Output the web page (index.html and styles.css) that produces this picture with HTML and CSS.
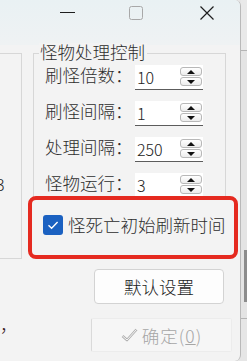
FILE: index.html
```html
<!DOCTYPE html>
<html lang="zh-CN">
<head>
  <meta charset="UTF-8">
  <meta name="viewport" content="width=device-width, initial-scale=1.0">
  <title>怪物处理控制</title>
  <link rel="stylesheet" href="styles.css">
</head>
<body>

<div class="screen">
  <div class="window">

    <div class="titlebar">
      <span class="tb-btn tb-min">
        <svg width="15" height="14" viewBox="0 0 15 14"><line x1="0" y1="6.5" x2="15" y2="6.5" stroke="#1e1e1e" stroke-width="1.1"/></svg>
      </span>
      <span class="tb-btn tb-max">
        <svg width="14" height="14" viewBox="0 0 14 14"><rect x="0.5" y="0.5" width="13" height="13" rx="2" fill="none" stroke="#a8a8a8" stroke-width="1"/></svg>
      </span>
      <span class="tb-btn tb-close">
        <svg width="14" height="14" viewBox="0 0 14 14"><path d="M0.5 0.5 L13.5 13.5 M13.5 0.5 L0.5 13.5" stroke="#1e1e1e" stroke-width="1.2"/></svg>
      </span>
    </div>

    <div class="content">
      <div class="left-pane">
        <div class="left-group">
          <span class="left-val">3</span>
        </div>
        <span class="comma">，</span>
      </div>

      <div class="right-pane">
        <div class="group">
          <span class="group-title">怪物处理控制</span>
          <div class="rows">
            <div class="row">
              <span class="label">刷怪倍数：</span>
              <div class="field"><span class="value">10</span><span class="spin"><span class="up"></span><span class="down"></span></span></div>
            </div>
            <div class="row">
              <span class="label">刷怪间隔：</span>
              <div class="field"><span class="value">1</span><span class="spin"><span class="up"></span><span class="down"></span></span></div>
            </div>
            <div class="row">
              <span class="label">处理间隔：</span>
              <div class="field"><span class="value">250</span><span class="spin"><span class="up"></span><span class="down"></span></span></div>
            </div>
            <div class="row">
              <span class="label">怪物运行：</span>
              <div class="field"><span class="value">3</span><span class="spin"><span class="up"></span><span class="down"></span></span></div>
            </div>
          </div>
        </div>

        <label class="highlight">
          <span class="checkbox">
            <svg width="20" height="20" viewBox="0 0 20 20"><path d="M5.5 10.2 L8.6 13.2 L14.6 7" fill="none" stroke="#fff" stroke-width="1.4"/></svg>
          </span>
          <span class="check-label">怪死亡初始刷新时间</span>
        </label>

        <button class="btn btn-default">默认设置</button>
        <button class="btn btn-ok">
          <svg class="ok-icon" width="17" height="14" viewBox="0 0 17 14">
            <path d="M1.5 8 L6 12 L15.5 1.5" fill="none" stroke="#b0b0b0" stroke-width="2.6" stroke-linejoin="round"/>
            <path d="M1.5 8 L6 12 L15.5 1.5" fill="none" stroke="#f6f6f6" stroke-width="1"/>
          </svg>
          <span>确定(<u>0</u>)</span>
        </button>
      </div>
    </div>
  </div>

  <div class="edge">
    <div class="edge-top"></div>
    <div class="edge-mid"><span class="edge-bar"></span></div>
    <div class="edge-low"></div>
  </div>
</div>

</body>
</html>
```

FILE: styles.css
```css
body {
  margin: 0;
  background: #e6e6e6;
  font-family: "Noto Sans CJK SC", "Noto Sans", sans-serif;
  font-weight: 300;
  color: #2e2e2e;
}
.screen {
  display: flex;
  width: 247px;
  height: 361px;
  overflow: hidden;
}
.window {
  width: 241px;
  height: 361px;
  flex: none;
  box-sizing: border-box;
  background: #f3f3f3;
  border-right: 1px solid #b9b9b9;
  border-radius: 0 6px 6px 0;
  display: flex;
  flex-direction: column;
  overflow: hidden;
}
.titlebar {
  height: 45px;
  flex: none;
  box-sizing: border-box;
  padding: 6px 0 0 60px;
  display: flex;
  align-items: flex-start;
  background: linear-gradient(#e9f1f3, #eff2f3);
}
.tb-btn svg {
  display: block;
}
.tb-max {
  margin-left: 54px;
}
.tb-close {
  margin-left: 57px;
}
.content {
  display: flex;
  flex: 1;
}
.left-pane {
  width: 22px;
  flex: none;
  display: flex;
  flex-direction: column;
}
.left-group {
  margin-top: 8px;
  height: 206px;
  box-sizing: border-box;
  border: 1px solid #d7d7d7;
  border-left: none;
  overflow: hidden;
}
.left-val {
  display: block;
  margin: 120px 0 0 -4px;
  font-size: 16px;
  line-height: 20px;
  color: #222;
}
.comma {
  margin-top: 56px;
  font-size: 17.5px;
  line-height: 20px;
  color: #3a2222;
}
.right-pane {
  margin-left: 6px;
  width: 210px;
  display: flex;
  flex-direction: column;
  align-items: flex-start;
}
.group {
  margin: 8px 0 0 5px;
  width: 193px;
  height: 146px;
  box-sizing: border-box;
  border: 1px solid #d7d7d7;
  display: flex;
  flex-direction: column;
  align-items: flex-start;
}
.group-title {
  margin: -11px 0 0 5px;
  padding: 0 2px 0 1px;
  background: #f3f3f3;
  font-size: 17.5px;
  line-height: 18px;
}
.rows {
  margin: -2px 0 0 11px;
}
.row {
  display: flex;
  align-items: center;
  height: 36px;
}
.label {
  width: 90px;
  margin-top: -5px;
  font-size: 17.5px;
  line-height: 20px;
}
.field {
  width: 68px;
  height: 25px;
  box-sizing: border-box;
  padding: 0 1px 0 2px;
  background: #fff;
  border-bottom: 1px solid #5c5c5c;
  display: flex;
  align-items: center;
  justify-content: space-between;
}
.value {
  font-size: 16px;
  line-height: 20px;
  color: #222;
}
.spin {
  width: 22px;
  display: flex;
  flex-direction: column;
  gap: 1px;
}
.spin span {
  height: 9px;
  box-sizing: border-box;
  border: 1px solid #b8b8b8;
  border-radius: 3px;
  background: linear-gradient(#ffffff, #ececec);
  display: flex;
  align-items: center;
  justify-content: center;
}
.spin .up::before,
.spin .down::before {
  content: "";
  border-left: 4px solid transparent;
  border-right: 4px solid transparent;
}
.spin .up::before {
  border-bottom: 4px solid #111;
}
.spin .down::before {
  border-top: 4px solid #111;
}
.highlight {
  margin-top: -3px;
  width: 210px;
  height: 63px;
  box-sizing: border-box;
  border: 4px solid #e52a20;
  border-radius: 8px;
  padding: 0 0 6px 11px;
  display: flex;
  align-items: center;
  gap: 5px;
}
.checkbox {
  width: 20px;
  height: 20px;
  border-radius: 3px;
  background: #1b61c1;
}
.checkbox svg {
  display: block;
}
.check-label {
  font-size: 17.5px;
  line-height: 20px;
}
.btn {
  padding: 0;
  box-sizing: border-box;
  font-family: inherit;
  font-weight: 300;
  font-size: 17.5px;
  display: flex;
  align-items: center;
  justify-content: center;
}
.btn-default {
  margin: 10px 0 0 66px;
  width: 130px;
  height: 35px;
  border: 1px solid #d3d3d3;
  border-radius: 4px;
  background: #fdfdfd;
  color: #222;
}
.btn-ok {
  margin: 14px 0 0 63px;
  width: 141px;
  height: 34px;
  border: 1px solid #ececec;
  border-left-color: #dadada;
  border-radius: 2px;
  background: #f6f6f6;
  color: #a6a6a6;
  gap: 4px;
}
.ok-icon {
  display: block;
}
.btn-ok span {
  letter-spacing: 1px;
}
.edge {
  flex: 1;
  display: flex;
  flex-direction: column;
  background: #e4e4e4;
}
.edge-top {
  height: 50px;
  border-bottom: 1px solid #b4b4b4;
  background: #e9e9e9;
}
.edge-mid {
  height: 267px;
  display: flex;
  justify-content: flex-end;
  align-items: flex-start;
}
.edge-bar {
  margin-top: 199px;
  width: 3px;
  height: 52px;
  background: #8c8c8c;
}
.edge-low {
  flex: 1;
  border-top: 1px solid #b4b4b4;
  background: #e6e6e6;
}
```
